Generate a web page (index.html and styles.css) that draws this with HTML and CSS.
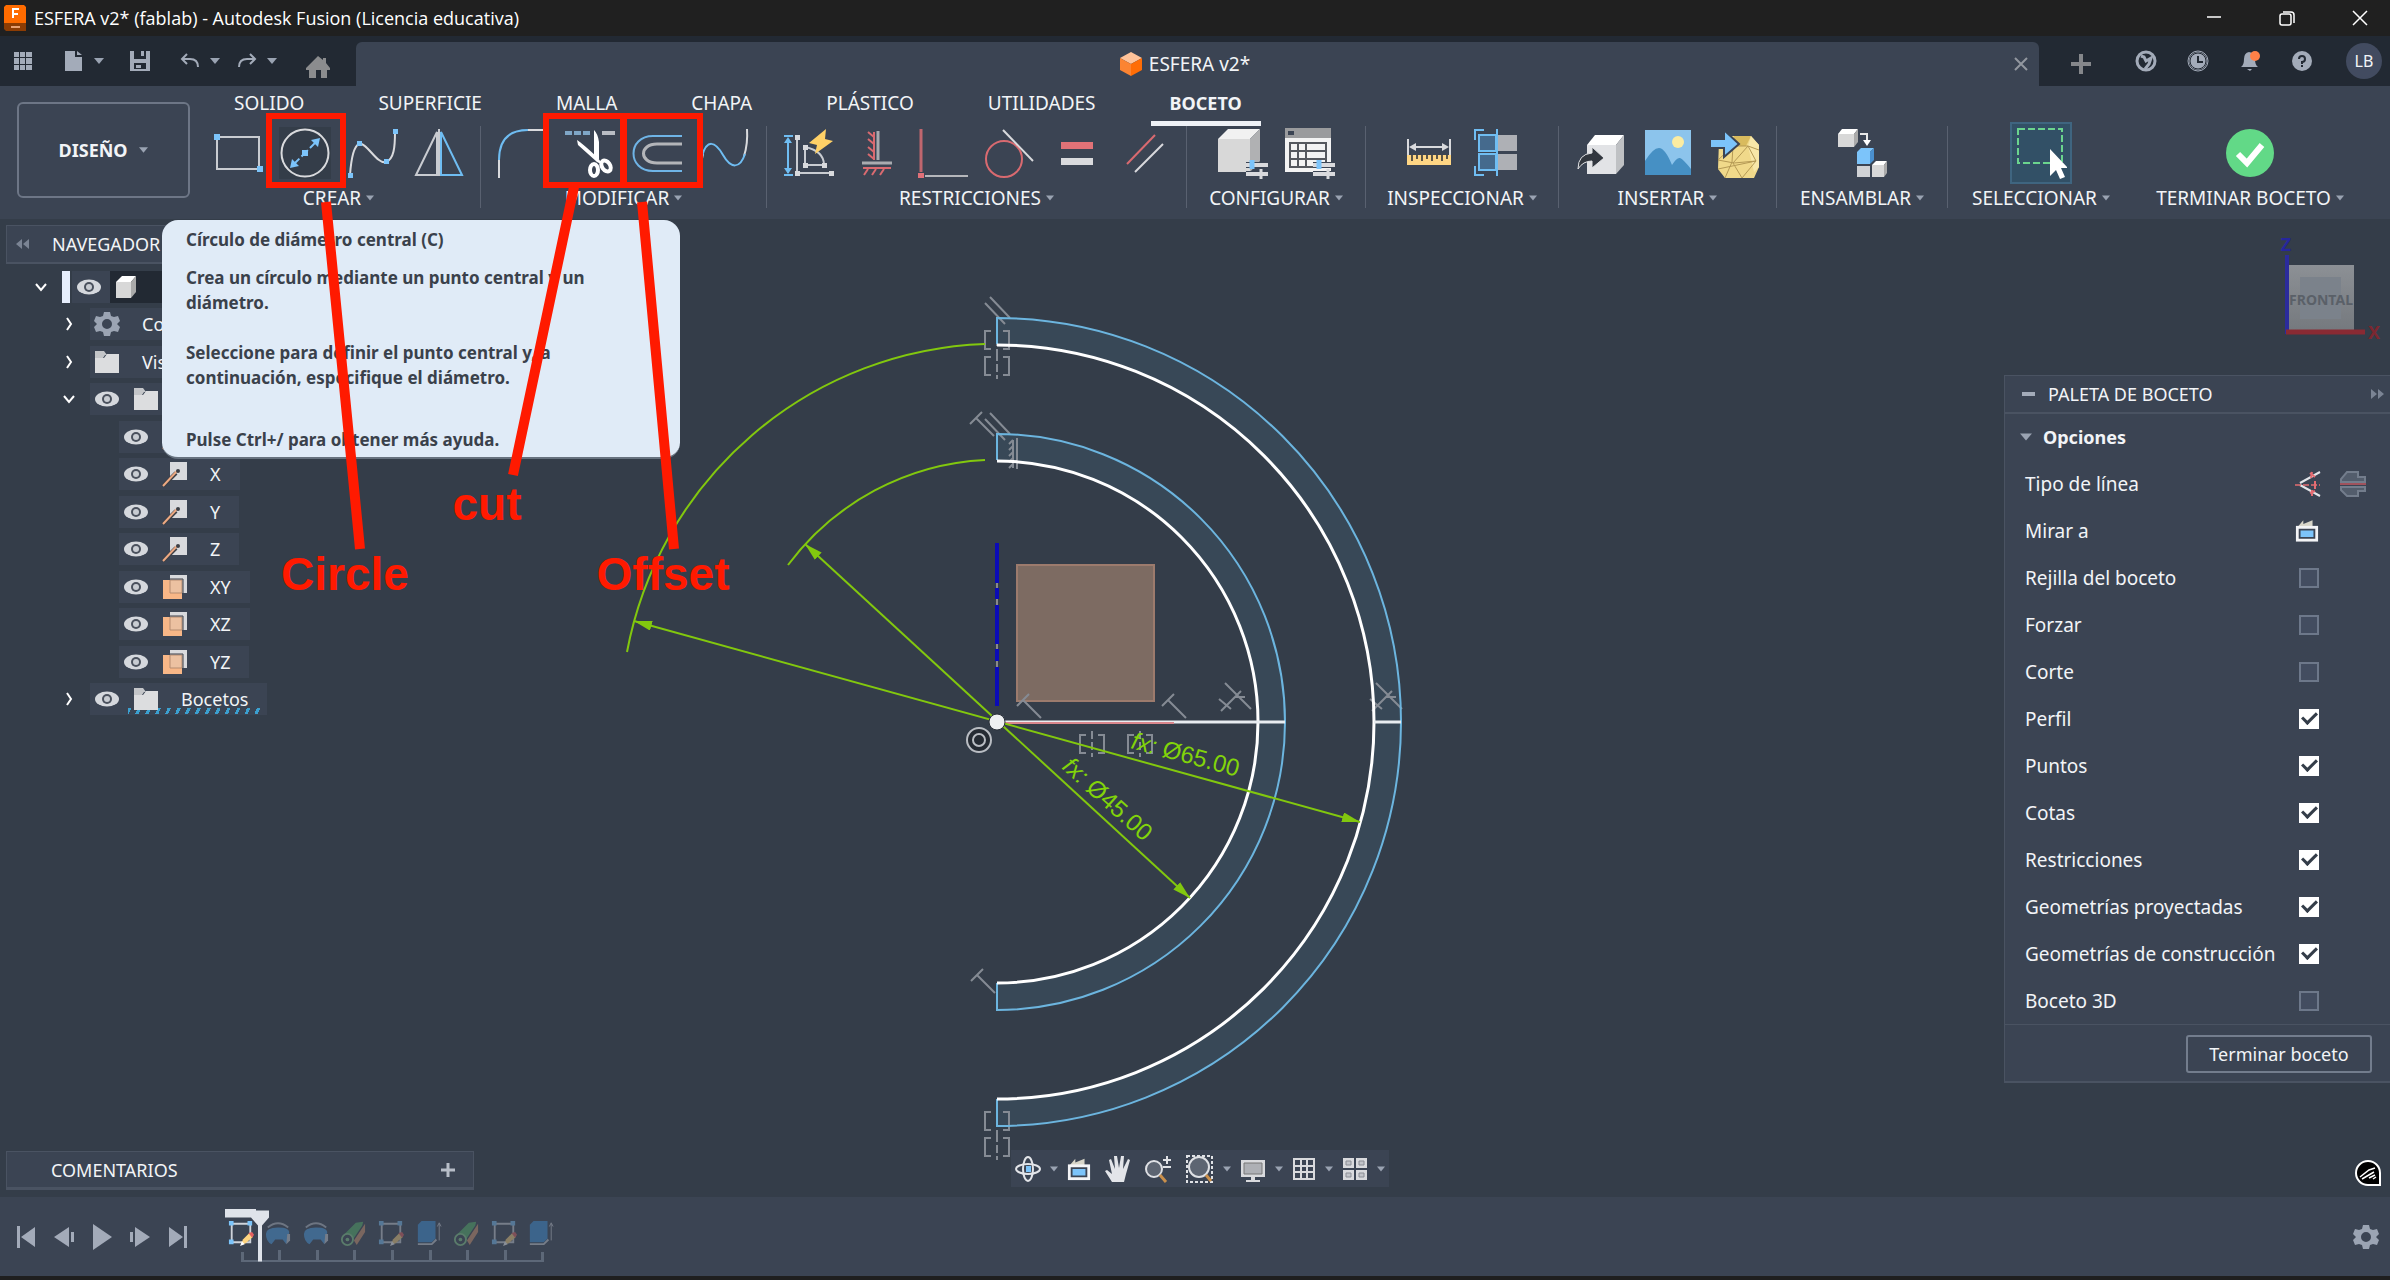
FILE: index.html
```html
<!DOCTYPE html>
<html lang="es">
<head>
  <meta charset="UTF-8" />
  <meta name="viewport" content="width=device-width, initial-scale=1.0"/>
  <title>ESFERA v2* (fablab) - Autodesk Fusion</title>
  <link rel="stylesheet" href="styles.css">
</head>
<body>

<!-- shared symbols -->
<svg class="sprite" aria-hidden="true">
  <symbol id="eye" viewBox="0 0 26 20"><ellipse cx="13" cy="10" rx="12" ry="7.500" fill="#d5d8dd"/><circle cx="13" cy="10" r="5" fill="#4a515d"/><circle cx="13" cy="10" r="3" fill="#c8ccd2"/></symbol>
  <symbol id="folder" viewBox="0 0 26 26"><path d="M1 2h9l3 4h-2l-2 3H1z" fill="#c4c6c9"/><path d="M1 9h9l3-4h12v19H1z" fill="#dcdddf"/></symbol>
  <symbol id="axis" viewBox="0 0 26 26"><path d="M8 1h17v18H8z" fill="#d9dadd"/><path d="M1 25 14 12" stroke="#3c3f46" stroke-width="4"/><path d="M1 25 15 10" stroke="#eda982" stroke-width="2"/><circle cx="16" cy="10" r="2" fill="#3c3f46"/></symbol>
  <symbol id="plane" viewBox="0 0 26 26"><path d="M8 1h17v18H8z" fill="#d9dadd"/><path d="M1 6h19v19H1z" fill="#f8b787"/><path d="M8 6h12v13H8z" fill="#ecc1a1" stroke="#b58c70"/><path d="M8 5h13v14" fill="none" stroke="#3c3f46" stroke-width="1"/></symbol>
  <symbol id="open" viewBox="0 0 16 16"><path d="m3 5 5 6 5-6" fill="none" stroke="#fff" stroke-width="2"/></symbol>
  <symbol id="closed" viewBox="0 0 16 16"><path d="m6 2 4 6-4 6" fill="none" stroke="#fff" stroke-width="2"/></symbol>
  <symbol id="arrow" viewBox="0 0 10 8"><path d="M0 1h10L5 7z" fill="#9aa3b2"/></symbol>
  <symbol id="look" viewBox="0 0 26 26"><path d="m3 9 6-7v4l10-4v7z" fill="#d8d6c9"/><path d="M1 8h24v17H1z" fill="#f3f4f6"/><path d="M5 12h16v9H5z" fill="#7cc4fa" stroke="#3b4453" stroke-width="2"/></symbol>
  <symbol id="gear" viewBox="0 0 26 26"><path fill-rule="evenodd" fill="#9ba4b3" d="M10 1h6l1 4 3 1 4-1 2 5-3 3 3 3-2 5-4-1-3 1-1 4h-6l-1-4-3-1-4 1-2-5 3-3-3-3 2-5 4 1 3-1zM13 8a5 5 0 1 0 0 10 5 5 0 0 0 0-10z"/></symbol>
  <symbol id="t-sketch" viewBox="0 0 28 28"><path d="M4 4h20v20H4z" fill="none" stroke="#cfd3da" stroke-width="2"/><path d="M1 1h5v5H1zM21 1h5v5h-5zM1 21h5v5H1z" fill="#7cc4fa"/><path d="m14 27 2-6 7-7 4 4-8 7z" fill="#ffd580"/><path d="m22 14 4-1 2 3-2 3z" fill="#e46161"/><path d="m13 28 2-5 3 3z" fill="#fff"/></symbol>
  <symbol id="t-revolve" viewBox="0 0 28 28"><path d="M3 8Q14-1 25 8" fill="none" stroke="#b8bec8" stroke-width="2"/><path d="M1 15q0-7 13-7t12 6l-3 12-4-5h-8l-4 5q-6-3-6-11z" fill="#4ba0ea"/><path d="M24 15h3v7l-4 4z" fill="#cfd3da"/></symbol>
  <symbol id="t-pipe" viewBox="0 0 28 28"><path d="M2 18 17 3l8-1-1 4-12 18z" fill="#58b86b"/><path d="M15 22 27 4v9L18 27z" fill="#d99a72"/><circle cx="8" cy="21" r="6" fill="#3b4453" stroke="#8ad08f" stroke-width="2"/><circle cx="8" cy="21" r="2" fill="#8ad08f"/></symbol>
  <symbol id="t-extrude" viewBox="0 0 28 28"><path d="M2 5 6 1h15v19l-4 4H2z" fill="#3f94e0"/><path d="M2 26h15l5-5" fill="none" stroke="#cfd3da" stroke-width="2"/><path d="M25 22V4m-2 3 2-4 2 4" fill="none" stroke="#cfd3da" stroke-width="1"/></symbol>
  <symbol id="sliders" viewBox="0 0 24 20"><path d="M1 6h22M1 15h22" stroke="#3b4453" stroke-width="6"/><path d="M1 6h22M1 15h22" stroke="#d9dadd" stroke-width="4"/><path d="M7 1v9" stroke="#7cc4fa" stroke-width="5"/><path d="M16 10v10" stroke="#d9dadd" stroke-width="3"/></symbol>
</svg>

<header class="titlebar">
  <svg class="app-icon" width="22" height="26" viewBox="0 0 22 26"><path d="M2 0h18l2 2v16H0V2z" fill="#ff6b00"/><path d="M0 18h22v8H2l-2-2z" fill="#8c3c04"/><path d="M9 13V4h6M9 9h5" fill="none" stroke="#fff" stroke-width="2"/><path d="M7 22h9" stroke="#e8a070" stroke-width="2"/></svg>
  <span class="app-title">ESFERA v2* (fablab) - Autodesk Fusion (Licencia educativa)</span>
  <div class="window-buttons">
    <button aria-label="Minimizar"><svg width="16" height="16" viewBox="0 0 16 16"><path d="M1 7h14" stroke="#fff" stroke-width="1.500"/></svg></button>
    <button aria-label="Restaurar"><svg width="16" height="16" viewBox="0 0 16 16" fill="none" stroke="#fff" stroke-width="1.500"><rect x="1" y="4" width="11" height="11" rx="2"/><path d="M4 2h8q3 0 3 3v8"/></svg></button>
    <button aria-label="Cerrar"><svg width="16" height="16" viewBox="0 0 16 16"><path d="m1 1 14 14M15 1 1 15" stroke="#fff" stroke-width="1.500"/></svg></button>
  </div>
</header>

<div class="tabbar">
  <div class="quick">
    <button aria-label="Panel de datos"><svg width="20" height="20" viewBox="0 0 20 20"><path d="M1 1h5v5H1zm6 0h5v5H7zm6 0h6v5h-6zM1 7h5v6H1zm6 0h5v6H7zm6 0h6v6h-6zM1 14h5v5H1zm6 0h5v5H7zm6 0h6v5h-6z" fill="#a3abb9"/></svg></button>
    <button class="file" aria-label="Archivo"><svg width="20" height="22" viewBox="0 0 20 22"><path d="M1 1h10v6h7v14H1z" fill="#a3abb9"/><path d="M13 1v4h5z" fill="#a3abb9"/></svg><svg width="10" height="8"><use href="#arrow"/></svg></button>
    <button class="save" aria-label="Guardar"><svg width="20" height="20" viewBox="0 0 20 20"><path fill-rule="evenodd" d="M0 0h20v20H0zM4 0v8h12V0h-2v5h-3V0zM4 12v6h12v-6z" fill="#a3abb9"/><path d="M6 14h5v3H6z" fill="#a3abb9"/></svg></button>
    <button class="undo" aria-label="Deshacer"><svg width="20" height="16" viewBox="0 0 20 16"><path d="M2 6h8q8 0 8 8M7 1 2 6l5 5" fill="none" stroke="#a3abb9" stroke-width="2"/></svg><svg width="10" height="8"><use href="#arrow"/></svg></button>
    <button aria-label="Rehacer"><svg width="20" height="16" viewBox="0 0 20 16"><path d="M18 6h-8q-8 0-8 8M13 1l5 5-5 5" fill="none" stroke="#a3abb9" stroke-width="2"/></svg><svg width="10" height="8"><use href="#arrow"/></svg></button>
    <button class="home" aria-label="Inicio"><svg width="24" height="22" viewBox="0 0 24 22"><path fill-rule="evenodd" d="M12 0 17 4V2h3v5l4 5v2h-3v8H3v-8H0v-2zM10 14v8h5v-8z" fill="#8b8c8e"/></svg></button>
  </div>
  <div class="doc-tab">
    <div class="doc-name">
      <svg width="22" height="24" viewBox="0 0 22 24"><path d="m11 0 11 6-11 6L0 6z" fill="#ffc39a"/><path d="m0 6 11 6v12L0 18z" fill="#fb8432"/><path d="m22 6-11 6v12l11-6z" fill="#ff6d06"/></svg>
      <span>ESFERA v2*</span>
    </div>
    <button aria-label="Cerrar documento"><svg width="14" height="14" viewBox="0 0 14 14"><path d="m1 1 12 12M13 1 1 13" stroke="#92979f" stroke-width="2"/></svg></button>
  </div>
  <div class="account">
    <button class="new" aria-label="Nuevo"><svg width="20" height="20" viewBox="0 0 20 20"><path d="M10 0v20M0 10h20" stroke="#85878b" stroke-width="4"/></svg></button>
    <button aria-label="Extensiones"><svg width="22" height="22" viewBox="0 0 22 22"><circle cx="11" cy="11" r="9" fill="none" stroke="#a3abb9" stroke-width="3"/><path d="M6 6l3 1 2 4 5-3-2 6-4 5" fill="none" stroke="#a3abb9" stroke-width="3"/></svg></button>
    <button aria-label="Trabajos"><svg width="22" height="22" viewBox="0 0 22 22"><circle cx="11" cy="11" r="9" fill="#a3abb9"/><circle cx="11" cy="11" r="10" fill="none" stroke="#a3abb9"/><circle cx="11" cy="11" r="8" fill="none" stroke="#222933"/><path d="M11 6v6h5" fill="none" stroke="#222933" stroke-width="2"/></svg></button>
    <button aria-label="Notificaciones"><svg width="22" height="22" viewBox="0 0 22 22"><path d="M2 17q3-2 3-8 0-6 5-7 6 1 6 7 0 6 3 8zM8 19h5l-2 2z" fill="#a3abb9"/><circle cx="16" cy="6" r="5" fill="#ff8148"/></svg></button>
    <button aria-label="Ayuda"><svg width="22" height="22" viewBox="0 0 22 22"><circle cx="11" cy="11" r="10" fill="#a3abb9"/><path d="M8 9q0-3 3-3t3 3-3 3v2m0 1v2" fill="none" stroke="#222933" stroke-width="2"/></svg></button>
    <button class="avatar">LB</button>
  </div>
</div>

<div class="ribbon">
  <button class="workspace-switch">DISEÑO <svg width="9" height="8" viewBox="0 0 10 8"><use href="#arrow"/></svg></button>
  <div class="ribbon-main">
    <nav class="ribbon-tabs">
      <a href="#">SOLIDO</a>
      <a href="#">SUPERFICIE</a>
      <a href="#">MALLA</a>
      <a href="#">CHAPA</a>
      <a href="#">PLÁSTICO</a>
      <a href="#">UTILIDADES</a>
      <a href="#" class="active">BOCETO</a>
    </nav>
    <div class="groups">
      <section class="group">
        <div class="tools">
          <button aria-label="Rectángulo"><svg viewBox="0 0 52 52"><path d="M5 10h42v32H5z" fill="none" stroke="#c9ccd1" stroke-width="2"/><path d="M2 7h6v6H2zM45 39h6v6h-6z" fill="#7cc4fa"/></svg></button>
          <button aria-label="Círculo"><svg viewBox="0 0 52 52"><path d="M-3-2h58v56H-3z" fill="#343d49"/><circle cx="26" cy="26" r="23.500" fill="none" stroke="#d9dadd" stroke-width="2"/><path d="m14 38 24-24" stroke="#7cc4fa" stroke-width="2" stroke-dasharray="9 3"/><path d="m11 41 2-9 7 7zM41 11l-9 2 7 7zM23 23h6v6h-6z" fill="#7cc4fa"/></svg></button>
          <button aria-label="Spline"><svg viewBox="0 0 52 52"><path d="M4 48Q6 20 13 17C20 14 31 38 40 35 48 32 49 20 49 5" fill="none" stroke="#d9dadd" stroke-width="2"/><path d="M2 46h5v5H2zM11 14h5v5h-5zM38 32h5v5h-5zM47 2h5v5h-5z" fill="#7cc4fa"/></svg></button>
          <button aria-label="Simetría"><svg viewBox="0 0 52 52" fill="none" stroke-width="2"><path d="M3 48 24 5v43z" stroke="#c9ccd1"/><path d="M49 48 28 5v43z" stroke="#6fbdf2"/><path d="M26 2v47" stroke="#c9ccd1"/></svg></button>
        </div>
        <button class="menu">CREAR <svg width="8" height="8" viewBox="0 0 10 8"><use href="#arrow"/></svg></button>
      </section>
      <section class="group">
        <div class="tools">
          <button aria-label="Empalme"><svg viewBox="0 0 52 52" fill="none" stroke-width="2"><path d="M2 51V33M31 3h20" stroke="#d9dadd"/><path d="M2 33Q2 3 31 3" stroke="#6fbdf2"/></svg></button>
          <button aria-label="Recortar"><svg viewBox="0 0 52 52"><path d="M1 6h25" stroke="#7fa6c6" stroke-width="4" stroke-dasharray="7 2"/><path d="M38 6h13" stroke="#b9bdc4" stroke-width="4"/><path d="M30 3q4 4 5 12v17l-5-2zM13 13q5 3 21 18l5 7-6-3-19-17z" fill="#fff"/><g fill="none" stroke="#fff" stroke-width="4"><ellipse cx="30" cy="43" rx="4" ry="6"/><ellipse cx="42" cy="39" rx="4" ry="6" transform="rotate(-35 42 39)"/></g></svg></button>
          <button aria-label="Desfase"><svg viewBox="0 0 52 52" fill="none"><path d="M51 9H22C-4 9-4 44 22 44h29" stroke="#6fb4e6" stroke-width="2"/><path d="M51 17H26C8 17 8 36 26 36h25" stroke="#b3b5b9" stroke-width="3"/></svg></button>
          <button aria-label="Curva"><svg viewBox="0 0 52 52" fill="none" stroke-width="2"><path d="M1 51Q2 38 5 27M46 29Q50 17 49 2" stroke="#d9dadd"/><path d="M4 29C9 12 17 14 25 28 33 42 42 42 47 27" stroke="#6fbdf2"/></svg></button>
        </div>
        <button class="menu">MODIFICAR <svg width="8" height="8" viewBox="0 0 10 8"><use href="#arrow"/></svg></button>
      </section>
      <section class="group">
        <div class="tools">
          <button aria-label="Cota de boceto"><svg viewBox="0 0 52 52" fill="none"><path d="M1 9h9M1 48h9M5 12v34" stroke="#6fbdf2" stroke-width="2"/><path d="m5 10 4 6H1zM5 47l4-6H1z" fill="#6fbdf2"/><path d="M14 10v36h34M22 20v18h19Q41 24 22 20" stroke="#c9ccd1" stroke-width="2"/><path d="M12 8h5v5h-5zM12 44h5v5h-5zM46 44h5v5h-5zM20 18h5v5h-5zM20 36h5v5h-5zM39 36h5v5h-5z" fill="#d9dadd"/><path d="m43 2-17 14 8 2-2 9 18-13-8-2z" fill="#ffd167"/></svg></button>
          <button aria-label="Horizontal/Vertical"><svg viewBox="0 0 52 52" fill="none"><path d="M24 5v28M24 10l-6-5m6 12-6-5m6 13-6-5m6 12-6-5M13 41h28M18 42l-4 6m12-6-4 6m12-6-4 6" stroke="#d96a70" stroke-width="2"/><path d="M28 4v29M12 36h30" stroke="#a8abb0" stroke-width="3"/></svg></button>
          <button aria-label="Perpendicular"><svg viewBox="0 0 52 52"><path d="M4 2v43" stroke="#c0666e" stroke-width="3"/><path d="M1 46h6v5H1z" fill="#e07078"/><path d="M8 49h43" stroke="#b5b7bb" stroke-width="2"/></svg></button>
          <button aria-label="Tangente"><svg viewBox="0 0 52 52" fill="none" stroke-width="2"><circle cx="20" cy="32" r="18" stroke="#d96a70"/><path d="m19 3 30 31" stroke="#d9dadd"/></svg></button>
          <button aria-label="Igual"><svg viewBox="0 0 52 52"><path d="M10 15h32v7H10z" fill="#e17277"/><path d="M10 31h32v7H10z" fill="#d9dadd"/></svg></button>
          <button aria-label="Paralelo"><svg viewBox="0 0 52 52" fill="none" stroke-width="2"><path d="M9 37 37 8" stroke="#d96a70"/><path d="m17 45 28-28" stroke="#d9dadd"/></svg></button>
        </div>
        <button class="menu">RESTRICCIONES <svg width="8" height="8" viewBox="0 0 10 8"><use href="#arrow"/></svg></button>
      </section>
      <section class="group">
        <div class="tools">
          <button aria-label="Configurar modelo"><svg viewBox="0 0 52 52"><path d="m1 12 10-10h32L33 12z" fill="#f1f1f1"/><path d="M1 12h32v33H1z" fill="#d8d8d8"/><path d="M33 12 43 2v32L33 45z" fill="#b0b1b3"/><use href="#sliders" x="28" y="32" width="24" height="20"/></svg></button>
          <button aria-label="Tabla de configuración"><svg viewBox="0 0 52 52"><path d="M1 1h46v10H1z" fill="#9a9b9d"/><path d="M1 11h46v34H1z" fill="#f3f3f3"/><path d="M4 4h6v4H4z" fill="#3b4453"/><path d="M6 16h36v24H6zM6 24h36M6 32h36M14 16v24M22 16v24" fill="none" stroke="#55585e" stroke-width="2"/><use href="#sliders" x="28" y="32" width="24" height="20"/></svg></button>
        </div>
        <button class="menu">CONFIGURAR <svg width="8" height="8" viewBox="0 0 10 8"><use href="#arrow"/></svg></button>
      </section>
      <section class="group">
        <div class="tools">
          <button aria-label="Medir"><svg viewBox="0 0 52 52"><path d="M5 12v18M47 12v18M8 20h36" stroke="#d9dadd" stroke-width="2"/><path d="m6 20 7-4v8zM46 20l-7-4v8z" fill="#d9dadd"/><path d="M4 28h44v10H4z" fill="#ffd684"/><path d="M9 28v6m5-6v4m5-4v6m5-6v4m5-4v6m5-6v4m5-4v6m5-6v4" stroke="#5b5446" stroke-width="2"/></svg></button>
          <button aria-label="Análisis de sección"><svg viewBox="0 0 52 52"><path d="M27 8h20v16H27zM27 27h20v16H27z" fill="#aeb0b5"/><path d="M9 8h17v16H9zM9 27h17v16H9z" fill="#456a8d" stroke="#6fbdf2" stroke-width="2"/><path d="M14 3H5v10M5 39v9h9M27 2v47" fill="none" stroke="#6fbdf2" stroke-width="2"/></svg></button>
        </div>
        <button class="menu">INSPECCIONAR <svg width="8" height="8" viewBox="0 0 10 8"><use href="#arrow"/></svg></button>
      </section>
      <section class="group">
        <div class="tools">
          <button aria-label="Insertar derivación"><svg viewBox="0 0 52 52"><path d="m12 18 8-10h29l-8 10z" fill="#fff"/><path d="M12 18h29v29H12z" fill="#e2e3e6"/><path d="m41 18 8-10v30l-8 9z" fill="#bfc1c4"/><path d="M3 42q0-15 14-16v-6l12 11-12 10v-7Q8 34 3 42z" fill="#32373f" stroke="#e2e3e6"/></svg></button>
          <button aria-label="Insertar imagen"><svg viewBox="0 0 52 52"><path d="M3 3h46v45H3z" fill="#8cc4ec"/><circle cx="36" cy="15" r="6" fill="#fbeca1"/><path d="M3 34q8-13 14-13t13 17q5-8 8-7t11 11v6H3z" fill="#4690c4"/></svg></button>
          <button aria-label="Insertar malla"><svg viewBox="0 0 52 52"><path d="m10 14 10-5h22l8 9v22l-5 11H16L9 42z" fill="#f0d98a"/><path d="m25 9h17l-5 10H24z" fill="#d9bb5e"/><path d="m42 9 8 9v22l-5 5-6-26z" fill="#f7e7a8"/><path d="m9 33 15-14h15l11 4M9 33l16 3 22-2M24 19l-1 16-7 16M39 19 24 36l9 15M39 19l8 15-14 17M9 42l38-8" fill="none" stroke="#b59a55" stroke-width="1"/><path d="M1 12h14V3l15 14-15 13v-9H1z" fill="#7cc4fa" stroke="#3b4453" stroke-width="2"/></svg></button>
        </div>
        <button class="menu">INSERTAR <svg width="8" height="8" viewBox="0 0 10 8"><use href="#arrow"/></svg></button>
      </section>
      <section class="group">
        <div class="tools">
          <button aria-label="Nuevo componente"><svg viewBox="0 0 52 52"><path d="m2 7 4-5h16l-4 5z" fill="#fff"/><path d="M2 7h16v13H2z" fill="#d8d8d8"/><path d="m18 7 4-5v13l-4 5z" fill="#aaa"/><path d="M24 7h7v7" fill="none" stroke="#e7e7e7" stroke-width="2"/><path d="M27 13h8l-4 6z" fill="#fff"/><path d="m21 25 4-4h13l-4 4v12H21z" fill="#7cc4fa"/><path d="m34 25 4-4v12l-4 4z" fill="#4a90cf"/><path d="M21 39h13v11H21z" fill="#d0d2d5"/><path d="m36 38 4-4h11l-3 4z" fill="#fff"/><path d="M36 38h12v12H36z" fill="#d8d8d8"/><path d="m48 38 3-4v12l-3 4z" fill="#aaa"/></svg></button>
        </div>
        <button class="menu">ENSAMBLAR <svg width="8" height="8" viewBox="0 0 10 8"><use href="#arrow"/></svg></button>
      </section>
      <section class="group">
        <div class="tools">
          <button class="selected" aria-label="Seleccionar"><svg viewBox="0 0 52 52"><path d="M3 2h44v34H3z" fill="none" stroke="#6bd48e" stroke-width="2" stroke-dasharray="7 3"/><path d="M35 22v27l6-6 4 9 5-2-4-9h7z" fill="#fff"/></svg></button>
        </div>
        <button class="menu">SELECCIONAR <svg width="8" height="8" viewBox="0 0 10 8"><use href="#arrow"/></svg></button>
      </section>
      <section class="group">
        <div class="tools">
          <button aria-label="Terminar boceto"><svg viewBox="0 0 52 52"><circle cx="26" cy="26" r="24" fill="#62d987"/><path d="m14 27 9 9 15-18" fill="none" stroke="#fff" stroke-width="6"/></svg></button>
        </div>
        <button class="menu">TERMINAR BOCETO <svg width="8" height="8" viewBox="0 0 10 8"><use href="#arrow"/></svg></button>
      </section>
    </div>
  </div>
</div>

<main class="workspace">
  <!-- sketch canvas -->
  <svg class="canvas" viewBox="0 219 2390 978">
    <defs>
      <g id="sym" fill="none" stroke-width="2"><path d="M-6-9h-6V9h6M6-9h6V9H6"/><path d="M0-13v26" stroke-dasharray="8 3"/></g>
      <g id="perp" fill="none" stroke-width="2"><path d="M-6 6 6-6M0 0l18 18"/></g>
      <g id="par" fill="none" stroke-width="2"><path d="m-7-4 20 21M-2-10l20 21"/></g>
      <g id="tan" fill="none" stroke-width="2"><path d="m-12-14 26 26M-18 2-6 12M-16 14l20-20M-2 0h10"/></g>
      <marker id="tip" viewBox="0 0 18 10" refX="18" refY="5" markerWidth="18" markerHeight="10" markerUnits="userSpaceOnUse" orient="auto-start-reverse"><path d="M0 0v10l18-5z" fill="#82c80e"/></marker>
      <linearGradient id="cube" x2="0" y2="1"><stop offset="0" stop-color="#8c9095"/><stop offset="1" stop-color="#75797e"/></linearGradient>
    </defs>
    <g fill="#384857">
      <path d="M997 318a404 404 0 0 1 0 808v-27a377 377 0 0 0 0-754z"/>
      <path d="M997 434a288 288 0 0 1 0 576v-27a261 261 0 0 0 0-522z"/>
    </g>
    <rect x="1017" y="565" width="137" height="136" fill="#7d6b62" stroke="#9c7b6d" stroke-width="2"/>
    <g class="hint">
      <use href="#par" x="992" y="307"/>
      <use href="#perp" x="976" y="418"/>
      <use href="#par" x="992" y="423"/>
      <use href="#perp" x="977" y="975"/>
      <use href="#perp" x="1023" y="700"/>
      <use href="#perp" x="1168" y="700"/>
      <use href="#tan" x="1237" y="697"/>
      <use href="#tan" x="1388" y="697"/>
      <use href="#sym" x="997" y="340"/>
      <use href="#sym" x="997" y="366"/>
      <use href="#sym" x="997" y="1121"/>
      <use href="#sym" x="997" y="1147"/>
      <use href="#sym" x="1092" y="744"/>
      <use href="#sym" x="1140" y="744"/>
      <path d="M1017 438v31M1013 440v28M1009 444l4-4m-4 10 4-4m-4 10 4-4m-4 10 4-4m-4 10 4-4" fill="none" stroke-width="2"/>
      <g fill="#252b33" stroke="#b9bdc3" stroke-width="2"><circle cx="979" cy="740" r="12"/><circle cx="979" cy="740" r="6"/></g>
    </g>
    <g fill="none" stroke="#6cb5df" stroke-width="2">
      <path d="M997 344v-26a404 404 0 0 1 0 808v-27"/>
      <path d="M997 460v-26a288 288 0 0 1 0 576v-27"/>
    </g>
    <g fill="none" stroke="#fff" stroke-width="3">
      <path d="M997 345a377 377 0 0 1 0 754"/>
      <path d="M997 461a261 261 0 0 1 0 522"/>
      <path d="M997 722h288M1374 722h27" stroke="#e8ecf0"/>
      <path d="M1004 723h170" stroke="#d9868c" stroke-width="2"/>
    </g>
    <path d="M997 543v157" stroke="#8a8a8a" stroke-width="2"/>
    <path d="M997 543v40m0 5v11m0 6v39m0 5v12m0 6v39" stroke="#0b0bb6" stroke-width="4"/>
    <g fill="none" stroke="#82c80e" stroke-width="2">
      <path d="M985 344A378 378 0 0 0 627 652"/>
      <path d="M985 460A262 262 0 0 0 788 565"/>
      <path d="M634 621 1360 822" marker-start="url(#tip)" marker-end="url(#tip)"/>
      <path d="M805 544 1190 898" marker-start="url(#tip)" marker-end="url(#tip)"/>
    </g>
    <text class="dim" transform="translate(1130 748) rotate(15)"><tspan font-style="italic">fx:</tspan> Ø65.00</text>
    <text class="dim" transform="translate(1061 768) rotate(42)"><tspan font-style="italic">fx:</tspan> Ø45.00</text>
    <circle cx="997" cy="722" r="8" fill="#eef0f2" stroke="#2a3039"/>
    <!-- view cube -->
    <rect x="2288" y="265" width="66" height="66" fill="url(#cube)"/>
    <rect x="2300" y="277" width="41" height="42" fill="#7b828b"/>
    <text class="cube-face" x="2321" y="305">FRONTAL</text>
    <path d="M2287 255v79" stroke="#2b2b9c" stroke-width="4"/>
    <path d="M2286 332h79" stroke="#8a2a33" stroke-width="5"/>
    <text class="cube-axis" x="2286" y="251" fill="#26269c">Z</text>
    <text class="cube-axis" x="2374" y="339" fill="#7c2730">X</text>
  </svg>

  <aside class="left">
    <section class="browser">
      <h2 class="panel-head"><svg width="14" height="10" viewBox="0 0 14 10"><path d="M6 0v10L0 5zM13 0v10L7 5z" fill="#7b8494"/></svg>NAVEGADOR</h2>
      <ul class="tree">
        <li class="root"><svg class="chev"><use href="#open"/></svg><span class="mark"></span><span class="node"><svg class="eye"><use href="#eye"/></svg><span class="root-name"><svg width="24" height="24" viewBox="0 0 24 24"><path d="m2 7 6-6h14l-5 6z" fill="#fff"/><path d="M2 7h15v16H2z" fill="#d8d8d8"/><path d="m17 7 5-6v16l-5 6z" fill="#aaa"/></svg></span></span></li>
        <li class="l1"><svg class="chev"><use href="#closed"/></svg><span class="node"><svg class="pic"><use href="#gear"/></svg><span>Configuración</span></span></li>
        <li class="l1"><svg class="chev"><use href="#closed"/></svg><span class="node"><svg class="pic"><use href="#folder"/></svg><span>Vistas guardadas</span></span></li>
        <li class="l1"><svg class="chev"><use href="#open"/></svg><span class="node"><svg class="eye"><use href="#eye"/></svg><svg class="pic"><use href="#folder"/></svg><span>Origen</span></span></li>
        <li class="l2"><span class="node"><svg class="eye"><use href="#eye"/></svg><svg class="pic"><use href="#axis"/></svg><span>O</span></span></li>
        <li class="l2"><span class="node"><svg class="eye"><use href="#eye"/></svg><svg class="pic"><use href="#axis"/></svg><span>X</span></span></li>
        <li class="l2"><span class="node"><svg class="eye"><use href="#eye"/></svg><svg class="pic"><use href="#axis"/></svg><span>Y</span></span></li>
        <li class="l2"><span class="node"><svg class="eye"><use href="#eye"/></svg><svg class="pic"><use href="#axis"/></svg><span>Z</span></span></li>
        <li class="l2"><span class="node"><svg class="eye"><use href="#eye"/></svg><svg class="pic"><use href="#plane"/></svg><span>XY</span></span></li>
        <li class="l2"><span class="node"><svg class="eye"><use href="#eye"/></svg><svg class="pic"><use href="#plane"/></svg><span>XZ</span></span></li>
        <li class="l2"><span class="node"><svg class="eye"><use href="#eye"/></svg><svg class="pic"><use href="#plane"/></svg><span>YZ</span></span></li>
        <li class="l1 editing"><svg class="chev"><use href="#closed"/></svg><span class="node"><svg class="eye"><use href="#eye"/></svg><svg class="pic"><use href="#folder"/></svg><span>Bocetos</span></span></li>
      </ul>
    </section>
    <section class="comments">
      <h2>COMENTARIOS</h2>
      <button aria-label="Añadir comentario"><svg width="14" height="14" viewBox="0 0 14 14"><path d="M7 0v14M0 7h14" stroke="#b7bdc8" stroke-width="3"/></svg></button>
    </section>
  </aside>

  <div class="view-tools">
    <button aria-label="Órbita"><svg width="26" height="26" viewBox="0 0 26 26" fill="none" stroke="#e3e5e9" stroke-width="2"><ellipse cx="13" cy="13" rx="5" ry="12"/><ellipse cx="13" cy="13" rx="12" ry="5"/><path d="M11 10h5v6h-5z" fill="#7cc4fa" stroke="none"/></svg></button>
    <svg class="drop"><use href="#arrow"/></svg>
    <button aria-label="Mirar a"><svg width="24" height="26"><use href="#look"/></svg></button>
    <button class="wide" aria-label="Encuadre"><svg width="28" height="28" viewBox="0 0 28 28"><path d="m8 27-7-11 2-1 5 4L5 5l2-1 4 10L10 1h3l2 12 2-12h3l-1 13 5-10 2 1-4 14-2 8z" fill="#e3e5e9"/></svg></button>
    <button class="wide" aria-label="Zoom"><svg width="28" height="28" viewBox="0 0 28 28"><circle cx="9" cy="14" r="8" fill="#5d6572" stroke="#dfe1e5" stroke-width="2"/><path d="m15 20 6 7" stroke="#c98f4b" stroke-width="3"/><path d="M22 1v8M18 5h8M18 12h8" stroke="#dfe1e5" stroke-width="2"/></svg></button>
    <button class="wide" aria-label="Ajustar"><svg width="28" height="28" viewBox="0 0 28 28"><path d="M1 1h25v26H1z" fill="none" stroke="#dfe1e5" stroke-width="2" stroke-dasharray="3 2"/><circle cx="13" cy="12" r="10" fill="#5d6572" stroke="#dfe1e5" stroke-width="2"/><path d="m20 20 5 6" stroke="#c98f4b" stroke-width="3"/></svg></button>
    <svg class="drop"><use href="#arrow"/></svg>
    <button aria-label="Visualización"><svg width="26" height="26" viewBox="0 0 26 26"><path d="M1 4h24v17H1z" fill="#d9dadd"/><path d="M4 7h18v11H4z" fill="#aeb0b5" stroke="#777"/><path d="M11 21h4v3h5v2H6v-2h5z" fill="#d9dadd"/></svg></button>
    <svg class="drop"><use href="#arrow"/></svg>
    <button aria-label="Rejilla"><svg width="24" height="24" viewBox="0 0 24 24"><path d="M2 2h20v20H2zM2 9h20M2 15h20M9 2v20M15 2v20" fill="none" stroke="#d9dadd" stroke-width="2"/></svg></button>
    <svg class="drop"><use href="#arrow"/></svg>
    <button aria-label="Ventanas gráficas"><svg width="26" height="26" viewBox="0 0 26 26"><path d="M1 2h11v10H1zM14 2h11v10H14zM1 14h11v10H1zM14 14h11v10H14z" fill="#d9dadd"/><path d="M4 5h5v4H4zM17 5h5v4h-5zM4 17h5v4H4zM17 17h5v4h-5z" fill="#c2c4c9" stroke="#8b8e95"/></svg></button>
    <svg class="drop"><use href="#arrow"/></svg>
  </div>

  <aside class="right">
    <section class="palette">
      <h2 class="palette-head"><svg width="13" height="4"><rect width="13" height="4" fill="#a3abb9"/></svg><span>PALETA DE BOCETO</span><svg width="13" height="10" viewBox="0 0 13 10"><path d="M0 0v10l6-5zM7 0v10l6-5z" fill="#7b8494"/></svg></h2>
      <h3><svg width="12" height="10" viewBox="0 0 10 8"><use href="#arrow"/></svg>Opciones</h3>
      <div class="option"><span>Tipo de línea</span>
        <span class="option-tools">
          <button aria-label="Construcción"><svg width="26" height="26" viewBox="0 0 26 26" fill="none" stroke-width="2"><path d="M25 1 5 12M5 14l20 11" stroke="#e3e5e9"/><path d="M0 14h25" stroke="#e46c72" stroke-width="1.500" stroke-dasharray="6 2"/><path d="m15 2 5 4m-3-5-1 6m4 3v8M15 22l5-2m-3 5v-6" stroke="#e46c72"/></svg></button>
          <button aria-label="Línea de centro"><svg width="26" height="26" viewBox="0 0 26 26"><path d="M1 11V8l6-7h11v5h7v5zM1 16v3l6 6h11v-5h7v-4z" fill="#535d6c" stroke="#737d8c" stroke-width="2"/><path d="M0 13h26" stroke="#a0525c" stroke-width="2"/></svg></button>
        </span>
      </div>
      <div class="option"><span>Mirar a</span><span class="option-tools"><button aria-label="Mirar a"><svg width="24" height="25"><use href="#look"/></svg></button></span></div>
      <label class="option">Rejilla del boceto<input type="checkbox"></label>
      <label class="option">Forzar<input type="checkbox"></label>
      <label class="option">Corte<input type="checkbox"></label>
      <label class="option">Perfil<input type="checkbox" checked></label>
      <label class="option">Puntos<input type="checkbox" checked></label>
      <label class="option">Cotas<input type="checkbox" checked></label>
      <label class="option">Restricciones<input type="checkbox" checked></label>
      <label class="option">Geometrías proyectadas<input type="checkbox" checked></label>
      <label class="option">Geometrías de construcción<input type="checkbox" checked></label>
      <label class="option">Boceto 3D<input type="checkbox"></label>
      <div class="palette-foot"><button>Terminar boceto</button></div>
    </section>
    <button class="assistant" aria-label="Asistente"><svg width="26" height="26" viewBox="0 0 26 26"><path d="M13 1a12 12 0 1 0 0 24h12V13A12 12 0 0 0 13 1z" fill="#000" stroke="#fff" stroke-width="2"/><path d="m5 17 9-7 6-2M7 19l12-7M14 18l6-3M18 19l3-2" stroke="#fff" stroke-width="1.500" fill="none"/></svg></button>
  </aside>

  <div class="tooltip" role="tooltip">
    <h4>Círculo de diámetro central (C)</h4>
    <p>Crea un círculo mediante un punto central y un diámetro.</p>
    <p>Seleccione para definir el punto central y, a continuación, especifique el diámetro.</p>
    <p class="help">Pulse Ctrl+/ para obtener más ayuda.</p>
  </div>
</main>

<footer class="timeline">
  <div class="playback">
    <button aria-label="Inicio"><svg width="20" height="22" viewBox="0 0 20 22"><path d="M1 0h3v22H1zM19 1v20L5 11z" fill="#a3abb9"/></svg></button>
    <button aria-label="Anterior"><svg width="20" height="22" viewBox="0 0 20 22"><path d="M15 1v20L0 11zM17 6h3v10h-3z" fill="#a3abb9"/></svg></button>
    <button aria-label="Reproducir"><svg width="20" height="26" viewBox="0 0 20 26"><path d="M1 0v26l19-13z" fill="#a3abb9"/></svg></button>
    <button aria-label="Siguiente"><svg width="20" height="22" viewBox="0 0 20 22"><path d="M5 1v20l15-10zM0 6h3v10H0z" fill="#a3abb9"/></svg></button>
    <button aria-label="Fin"><svg width="20" height="22" viewBox="0 0 20 22"><path d="M16 0h3v22h-3zM1 1v20l14-10z" fill="#a3abb9"/></svg></button>
  </div>
  <ol class="history">
    <li class="current"><svg><use href="#t-sketch"/></svg></li>
    <li><svg><use href="#t-revolve"/></svg></li>
    <li><svg><use href="#t-revolve"/></svg></li>
    <li><svg><use href="#t-pipe"/></svg></li>
    <li><svg><use href="#t-sketch"/></svg></li>
    <li><svg><use href="#t-extrude"/></svg></li>
    <li><svg><use href="#t-pipe"/></svg></li>
    <li><svg><use href="#t-sketch"/></svg></li>
    <li><svg><use href="#t-extrude"/></svg></li>
  </ol>
  <button class="settings" aria-label="Preferencias"><svg width="26" height="26"><use href="#gear"/></svg></button>
</footer>

<!-- callouts drawn over the window -->
<svg class="callouts" viewBox="0 0 2390 1280">
  <g fill="none" stroke="#ff1a00" stroke-width="6">
    <rect x="269" y="116" width="74" height="69"/>
    <rect x="546" y="116" width="77" height="69"/>
    <rect x="624" y="116" width="76" height="69"/>
    <path d="m326 202 34 347M574 187l-61 288M642 202l32 347" stroke-width="10"/>
  </g>
  <text x="345" y="590">Circle</text>
  <text x="487" y="520">cut</text>
  <text x="663" y="590">Offset</text>
</svg>

</body>
</html>
```
FILE: styles.css
```css
* {
  box-sizing: border-box;
}

body {
  margin: 0;
  min-height: 100vh;
  display: flex;
  flex-direction: column;
  position: relative;
  font-family: 'Noto Sans', sans-serif;
  font-size: 18px;
  line-height: 24px;
  color: #f2f4f7;
  background: #343d49;
}

button {
  display: flex;
  align-items: center;
  justify-content: center;
  padding: 0;
  border: none;
  background: none;
  color: inherit;
  font: inherit;
  cursor: pointer;
}

a {
  color: inherit;
  text-decoration: none;
}

h2, h3, h4, p, ul, ol {
  margin: 0;
  padding: 0;
  font-size: inherit;
  font-weight: 400;
  list-style: none;
}

.sprite {
  position: absolute;
  width: 0;
  height: 0;
}

/* title bar */
.titlebar {
  display: flex;
  align-items: center;
  height: 36px;
  padding: 0 22px 0 4px;
  background: #202020;
}

.app-title {
  flex: 1;
  margin-left: 8px;
  font-family: 'Open Sans', sans-serif;
  color: #fff;
}

.window-buttons {
  display: flex;
  gap: 57px;
}

/* document tabs */
.tabbar {
  display: flex;
  height: 50px;
  background: #222933;
}

.quick {
  display: flex;
  align-items: center;
  width: 356px;
  padding-left: 13px;
}

.quick button {
  gap: 10px;
}

.quick .file {
  margin-left: 31px;
}

.quick .save {
  margin-left: 26px;
}

.quick .undo {
  margin: 0 17px 0 30px;
}

.quick .home {
  margin: 12px 0 0 29px;
}

.doc-tab {
  flex: 1;
  display: flex;
  align-items: center;
  margin-top: 6px;
  padding-right: 11px;
  border-radius: 6px 6px 0 0;
  background: #3b4453;
}

.doc-name {
  flex: 1;
  display: flex;
  align-items: center;
  justify-content: center;
  gap: 7px;
  font-size: 19px;
}

.account {
  display: flex;
  align-items: center;
  gap: 30px;
  width: 351px;
  padding-left: 32px;
}

.account .new {
  margin: 6px 14px 0 0;
}

.account .avatar {
  width: 36px;
  height: 36px;
  margin-left: 3px;
  border-radius: 50%;
  background: #424b60;
  font-size: 16px;
}

/* ribbon */
.ribbon {
  display: flex;
  height: 133px;
  padding: 0 24px 0 17px;
  background: #3b4453;
}

.workspace-switch {
  gap: 12px;
  width: 173px;
  height: 96px;
  margin: 16px 7px 0 0;
  border: 2px solid #6d7686;
  border-radius: 6px;
  font-weight: 700;
}

.ribbon-main {
  flex: 1;
}

.ribbon-tabs {
  display: flex;
  gap: 36px;
  height: 40px;
  padding-left: 18px;
  font-size: 19px;
}

.ribbon-tabs a {
  padding: 5px 19px 0;
}

.ribbon-tabs .active {
  font-size: 18px;
  font-weight: 700;
  border-bottom: 5px solid #eef1f6;
}

.groups {
  display: grid;
  grid-template-columns: 284fr 286fr 420fr 179fr 193fr 218fr 171fr 186fr 232fr;
}

.group {
  display: flex;
  flex-direction: column;
  align-items: center;
  height: 82px;
  gap: 7px;
  border-right: 1px solid #596170;
}

.group:nth-last-child(-n+2) {
  border-right: none;
}

.tools {
  display: flex;
  gap: 15px;
  padding-top: 1px;
}

.tools svg {
  width: 52px;
  height: 52px;
}

.tools .selected {
  outline: 2px solid #3f6580;
  outline-offset: 3px;
  background: #325066;
  box-shadow: 0 0 0 4px #325066;
}

.menu {
  gap: 5px;
  font-size: 19px;
}

/* workspace */
.workspace {
  position: relative;
  flex: 1;
  display: grid;
  grid-template-columns: 474px 1fr 386px;
}

.canvas {
  position: absolute;
  inset: 0;
  width: 100%;
  height: 100%;
}

.hint {
  stroke: #858b94;
}

.dim {
  font-family: 'Liberation Sans', Arial, sans-serif;
  font-size: 24px;
  fill: #82d40a;
}

.cube-face {
  font-size: 14px;
  font-weight: 700;
  fill: #5a6068;
  text-anchor: middle;
}

.cube-axis {
  font-size: 18px;
  font-weight: 700;
  text-anchor: middle;
}

.left,
.right {
  position: relative;
  grid-row: 1;
  display: flex;
  flex-direction: column;
  justify-content: space-between;
}

.left {
  grid-column: 1;
  padding: 6px 0 7px 6px;
}

.right {
  grid-column: 3;
  padding: 156px 0 11px;
}

.panel-head {
  display: flex;
  align-items: center;
  gap: 22px;
  width: 300px;
  height: 39px;
  padding-left: 9px;
  background: #3b4453;
  border: 1px solid #4a5362;
  border-bottom-width: 2px;
}

.tree {
  display: grid;
  grid-auto-rows: 1fr;
  width: 300px;
  min-height: 450px;
  margin-top: 4px;
}

.tree li {
  display: flex;
  align-items: center;
}

.chev {
  width: 16px;
  height: 16px;
}

.node {
  display: flex;
  align-items: center;
  height: 32px;
  padding: 0 19px 0 4px;
  background: #3b4453;
}

.eye {
  width: 26px;
  height: 20px;
}

.pic {
  width: 26px;
  height: 26px;
}

.node .pic + span {
  margin-left: 22px;
}

.eye + .pic {
  margin-left: 13px;
}

.root {
  padding-left: 27px;
}

.mark {
  width: 8px;
  height: 32px;
  margin: 0 2px 0 13px;
  background: #e6eefc;
}

.root-name {
  display: flex;
  align-items: center;
  width: 160px;
  height: 32px;
  margin-left: 8px;
  padding-left: 4px;
  background: #222933;
}

.l1 {
  padding-left: 55px;
}

.l1 .node {
  margin-left: 13px;
}

.l2 {
  padding-left: 113px;
}

.editing .node {
  background-image: repeating-linear-gradient(115deg, #3ba0d0 0 3px, transparent 3px 9px);
  background-size: 136px 6px;
  background-position: 38px 25px;
  background-repeat: no-repeat;
}

.comments {
  display: flex;
  align-items: center;
  justify-content: space-between;
  height: 39px;
  padding: 0 18px 0 44px;
  background: #3b4453;
  border: 1px solid #4a5362;
  border-bottom-width: 3px;
}

.view-tools {
  position: relative;
  grid-column: 1 / -1;
  grid-row: 1;
  place-self: end center;
  display: flex;
  align-items: center;
  gap: 9px;
  height: 37px;
  margin: 0 0 10px 10px;
  padding: 0 4px;
  background: #3b4453;
}

.view-tools .wide {
  margin-left: 4px;
}

.drop {
  width: 8px;
  height: 8px;
}

/* sketch palette */
.palette {
  background: #3b4453;
  border: 1px solid #4a5362;
  border-right: none;
  border-bottom-width: 2px;
}

.palette-head {
  display: flex;
  align-items: center;
  height: 38px;
  padding: 0 6px 0 17px;
  border-bottom: 2px solid #4a5362;
}

.palette-head span {
  flex: 1;
  margin-left: 13px;
}

.palette h3 {
  display: flex;
  align-items: center;
  gap: 11px;
  height: 46px;
  padding-left: 15px;
  font-weight: 700;
}

.option {
  display: flex;
  align-items: center;
  justify-content: space-between;
  height: 47px;
  padding: 0 71px 0 20px;
  font-size: 19px;
}

.option-tools {
  display: flex;
  gap: 19px;
  width: 72px;
  margin-right: -48px;
}

.option input {
  display: grid;
  place-items: center;
  appearance: none;
  width: 20px;
  height: 20px;
  margin: 0;
  border: 2px solid #6d788a;
  background: #434d60;
}

.option input:checked {
  border-color: #fff;
  background: #fff;
}

.option input:checked::before {
  content: '';
  width: 12px;
  height: 6px;
  margin-bottom: 4px;
  border: solid #343d49;
  border-width: 0 0 3px 3px;
  transform: rotate(-45deg);
}

.palette-foot {
  display: flex;
  justify-content: flex-end;
  padding: 10px 18px 8px;
  border-top: 1px solid #4a5362;
}

.palette-foot button {
  width: 186px;
  height: 38px;
  border: 2px solid #737d8d;
  border-radius: 3px;
}

.assistant {
  align-self: flex-end;
  margin-right: 9px;
}

.tooltip {
  position: absolute;
  top: 1px;
  left: 162px;
  width: 518px;
  padding: 7px 24px 5px;
  border-radius: 16px;
  border-bottom: 2px solid #67727f;
  background: #e0ebf7;
  color: #3a414b;
  font-size: 17px;
  line-height: 25px;
}

.tooltip h4 {
  margin-bottom: 13px;
  font-weight: 700;
}

.tooltip p {
  margin-bottom: 25px;
  font-weight: 700;
}

.tooltip .help {
  margin: 37px 0 0;
}

/* timeline */
.timeline {
  display: flex;
  align-items: center;
  height: 83px;
  padding: 0 11px 0 16px;
  background: #3b4453;
  border-bottom: 4px solid #1f1f1f;
}

.playback {
  display: flex;
  gap: 18px;
  width: 206px;
}

.history {
  display: flex;
  width: 338px;
  margin-top: 8px;
}

.history li {
  position: relative;
  flex: 1;
  height: 42px;
  text-align: center;
  border-bottom: 2px solid #5d6878;
}

.history li:first-child {
  background: linear-gradient(#5d6878, #5d6878) right bottom / 50% 2px no-repeat;
  border-bottom: none;
}

.history li:last-child {
  border-bottom: none;
  background: linear-gradient(#5d6878, #5d6878) left bottom / 50% 2px no-repeat;
}

.history li::after {
  content: '';
  position: absolute;
  left: 50%;
  bottom: 0;
  width: 3px;
  height: 10px;
  background: #5d6878;
}

.history svg {
  width: 26px;
  height: 26px;
  opacity: 0.4;
}

.history .current svg {
  opacity: 1;
}

/* playhead */
.current::before {
  content: '';
  position: absolute;
  z-index: 1;
  top: -11px;
  left: 3px;
  width: 44px;
  height: 53px;
  background: #dfe3ea;
  clip-path: polygon(0 0, 31px 0, 31px 2px, 44px 2px, 44px 9px, 37px 17px, 37px 53px, 33px 53px, 33px 17px, 26px 9px, 0 9px);
}

.settings {
  margin-left: auto;
}

/* callouts */
.callouts {
  position: absolute;
  top: 0;
  left: 0;
  width: 100%;
  pointer-events: none;
}

.callouts text {
  font-family: 'Liberation Sans', Arial, sans-serif;
  font-size: 46px;
  font-weight: 700;
  text-anchor: middle;
  fill: #ff1a00;
}
```
